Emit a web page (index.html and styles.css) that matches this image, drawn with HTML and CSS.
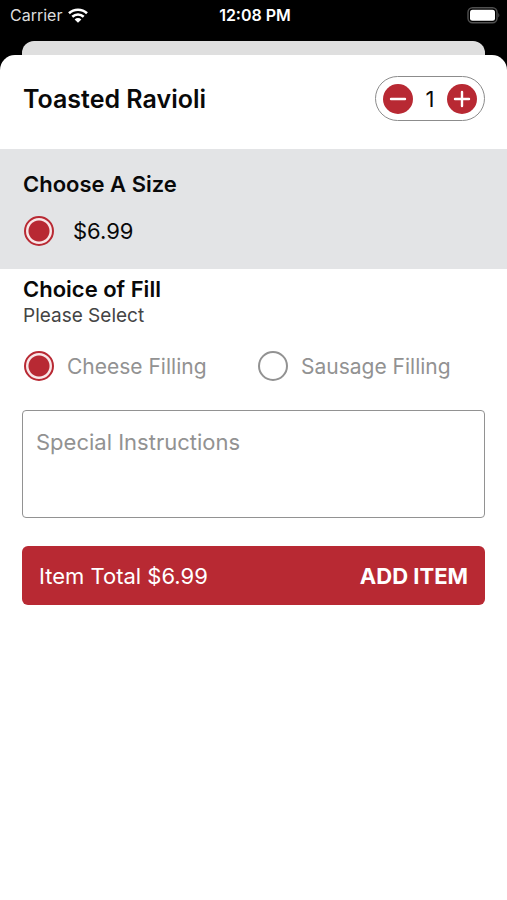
FILE: index.html
```html
<!DOCTYPE html>
<html lang="en">
<head>
<meta charset="utf-8">
<meta name="viewport" content="width=device-width, initial-scale=1">
<title>Toasted Ravioli</title>
<link rel="stylesheet" href="styles.css">
</head>
<body>
<div class="status">
  <div class="status-left">
    <span class="carrier">Carrier</span>
    <svg class="wifi" width="20" height="15" viewBox="0 0 20 15" aria-hidden="true">
      <g fill="none" stroke="#fff" stroke-width="2.6">
        <path d="M1 5.2C6 .5 14 .5 19 5.2"/>
        <path d="M4.3 8.8C7.6 5.8 12.4 5.8 15.7 8.8"/>
      </g>
      <path fill="#fff" d="M10 14.8 6.6 11.4C8.6 9.6 11.4 9.6 13.4 11.4Z"/>
    </svg>
  </div>
  <time class="clock">12:08 PM</time>
  <div class="status-right">
    <svg width="33" height="17" viewBox="0 0 33 17" aria-hidden="true">
      <rect x="1" y=".7" width="29" height="15" rx="4.5" fill="none" stroke="#505050" stroke-width="1.4"/>
      <rect x="3" y="2.7" width="25" height="11" rx="2.5" fill="#fff"/>
      <path d="M31.3 6c1.4.7 1.4 3.7 0 4.4Z" fill="#505050"/>
    </svg>
  </div>
</div>
<div class="sheet-behind"></div>
<main class="sheet">
  <header class="item-header">
    <h1 class="title">Toasted Ravioli</h1>
    <div class="stepper">
      <button class="step" type="button" aria-label="Decrease quantity">
        <svg width="30" height="30" viewBox="0 0 30 30"><path d="M8 15h14"/></svg>
      </button>
      <output class="quantity">1</output>
      <button class="step" type="button" aria-label="Increase quantity">
        <svg width="30" height="30" viewBox="0 0 30 30"><path d="M8 15h14M15 8v14"/></svg>
      </button>
    </div>
  </header>
  <section class="sizes">
    <h2 class="heading">Choose A Size</h2>
    <label class="option price"><input class="radio" type="radio" name="size" checked>$6.99</label>
  </section>
  <section class="choices">
    <h2 class="heading">Choice of Fill</h2>
    <p class="hint">Please Select</p>
    <div class="options">
      <label class="option"><input class="radio" type="radio" name="fill" checked>Cheese Filling</label>
      <label class="option"><input class="radio" type="radio" name="fill">Sausage Filling</label>
    </div>
    <textarea class="notes" aria-label="Special Instructions" placeholder="Special Instructions"></textarea>
    <button class="add" type="button"><span>Item Total $6.99</span><span class="add-label">ADD ITEM</span></button>
  </section>
</main>
</body>
</html>
```

FILE: styles.css
```css
* {
  box-sizing: border-box;
}

body {
  margin: 0;
  min-height: 100vh;
  display: flex;
  flex-direction: column;
  background: #000;
  color: #090909;
  font-family: Inter, "Liberation Sans", sans-serif;
  font-size: 22px;
}

h1, h2, p {
  margin: 0;
}

.status {
  display: grid;
  grid-template-columns: 1fr auto 1fr;
  align-items: center;
  height: 30px;
  padding: 0 7px 0 10px;
  margin-bottom: 11px;
  color: #fff;
  font-size: 16px;
}

.status-left {
  display: flex;
  align-items: center;
  gap: 6px;
}

.carrier {
  color: #ddd;
}

.clock {
  font-weight: 600;
}

.status-right {
  display: flex;
  justify-content: flex-end;
}

.sheet-behind {
  height: 14px;
  margin: 0 22px;
  border-radius: 12px 12px 0 0;
  background: #dfdfdf;
}

.sheet {
  flex: 1;
  border-radius: 15px 15px 0 0;
  background: #fff;
}

.item-header {
  display: flex;
  align-items: center;
  justify-content: space-between;
  padding: 21px 22px 28px 23px;
}

.title {
  font-size: 25px;
  font-weight: 600;
  line-height: 32px;
}

.stepper {
  display: flex;
  align-items: center;
  justify-content: space-between;
  width: 110px;
  height: 45px;
  padding: 0 7px;
  border: 1px solid #8c8c8c;
  border-radius: 23px;
}

.step {
  width: 30px;
  height: 30px;
  padding: 0;
  border: 0;
  border-radius: 50%;
  background: #b82933;
}

.step svg {
  display: block;
  fill: none;
  stroke: #fff;
  stroke-width: 2.4;
  stroke-linecap: round;
}

.sizes {
  padding: 21px 23px 23px;
  background: #e3e4e6;
}

.heading {
  font-size: 22px;
  font-weight: 600;
  line-height: 28px;
}

.option {
  display: flex;
  align-items: center;
  gap: 13px;
  height: 30px;
  color: #929292;
  font-size: 21px;
}

.price {
  gap: 19px;
  margin-top: 18px;
  color: #090909;
  font-size: 22px;
}

.radio {
  appearance: none;
  flex: none;
  width: 30px;
  height: 30px;
  margin: 0 0 0 1px;
  border: 2px solid #929292;
  border-radius: 50%;
}

.radio:checked {
  border-color: #b82933;
  background: radial-gradient(circle, #b82933 10px, #f8e6e7 11px);
}

.choices {
  padding: 6px 22px 28px;
}

.choices .heading,
.hint,
.options {
  padding-left: 1px;
}

.hint {
  color: #444;
  font-size: 19px;
  line-height: 26px;
}

.options {
  display: grid;
  grid-template-columns: 1fr 1fr;
  gap: 6px;
  margin: 22px 0 29px;
}

.notes {
  display: block;
  width: 100%;
  height: 108px;
  padding: 17px 13px;
  border: 1px solid #929292;
  border-radius: 4px;
  background: #fff;
  color: #090909;
  font: 22px/28px Inter, "Liberation Sans", sans-serif;
  resize: none;
}

.notes::placeholder {
  color: #929292;
  opacity: 1;
}

.add {
  display: flex;
  align-items: center;
  justify-content: space-between;
  width: 100%;
  height: 59px;
  margin-top: 28px;
  padding: 0 17px;
  border: 0;
  border-radius: 6px;
  background: #b82933;
  color: #fff;
  font-family: inherit;
  font-size: 22px;
}

.add-label {
  font-weight: 700;
}
```
